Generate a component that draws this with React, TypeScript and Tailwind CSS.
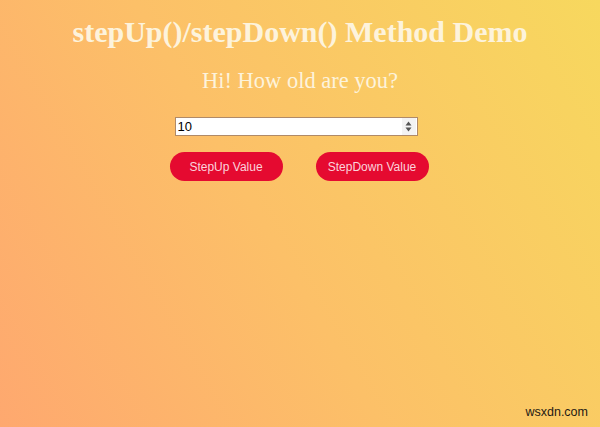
import { useState } from "react";

export default function App() {
  const [age, setAge] = useState(10);

  return (
    <div className="relative w-[600px] h-[427px] overflow-hidden bg-[linear-gradient(60deg,#fea86f_0%,#fcc068_45%,#f7d85e_100%)]">
      <div className="flex flex-col items-center">
        <h1 className="mt-[14px] text-[30px] leading-[36px] font-bold text-[#fdf3dc] font-['Liberation_Serif',serif]">
          stepUp()/stepDown() Method Demo
        </h1>
        <p className="mt-[18px] text-[22.5px] leading-[26px] text-[#fdf3dc] font-['Liberation_Serif',serif]">
          Hi! How old are you?
        </p>

        <div className="mt-[23px] mr-[8px] flex items-center w-[243px] h-[19px] bg-white border border-[#b08a68] font-['Liberation_Sans',sans-serif]">
          <input
            type="text"
            readOnly
            value={age}
            className="flex-1 min-w-0 h-full px-[2px] text-[13px] text-black outline-none bg-transparent"
          />
          <div className="flex flex-col items-center justify-center w-[14px] h-full mr-[1px] bg-[#f3f3f3]">
            <svg width="7" height="11" viewBox="0 0 7 11">
              <path d="M3.5 0.5 L6.5 4.5 L0.5 4.5 Z" fill="#555" />
              <path d="M3.5 10.5 L6.5 6.5 L0.5 6.5 Z" fill="#555" />
            </svg>
          </div>
        </div>

        <div className="mt-[16px] mr-[2px] flex gap-[33px] font-['Liberation_Sans',sans-serif]">
          <button
            type="button"
            onClick={() => setAge(age + 1)}
            className="w-[113px] h-[29px] rounded-full bg-[#e50a30] text-[12px] text-[#fbd3dc]"
          >
            StepUp Value
          </button>
          <button
            type="button"
            onClick={() => setAge(age - 1)}
            className="w-[113px] h-[29px] rounded-full bg-[#e50a30] text-[12px] text-[#fbd3dc]"
          >
            StepDown Value
          </button>
        </div>
      </div>

      <span className="absolute right-[12px] bottom-[5px] text-[12.5px] text-[#1f1a14] font-['Liberation_Sans',sans-serif]">
        wsxdn.com
      </span>
    </div>
  );
}
